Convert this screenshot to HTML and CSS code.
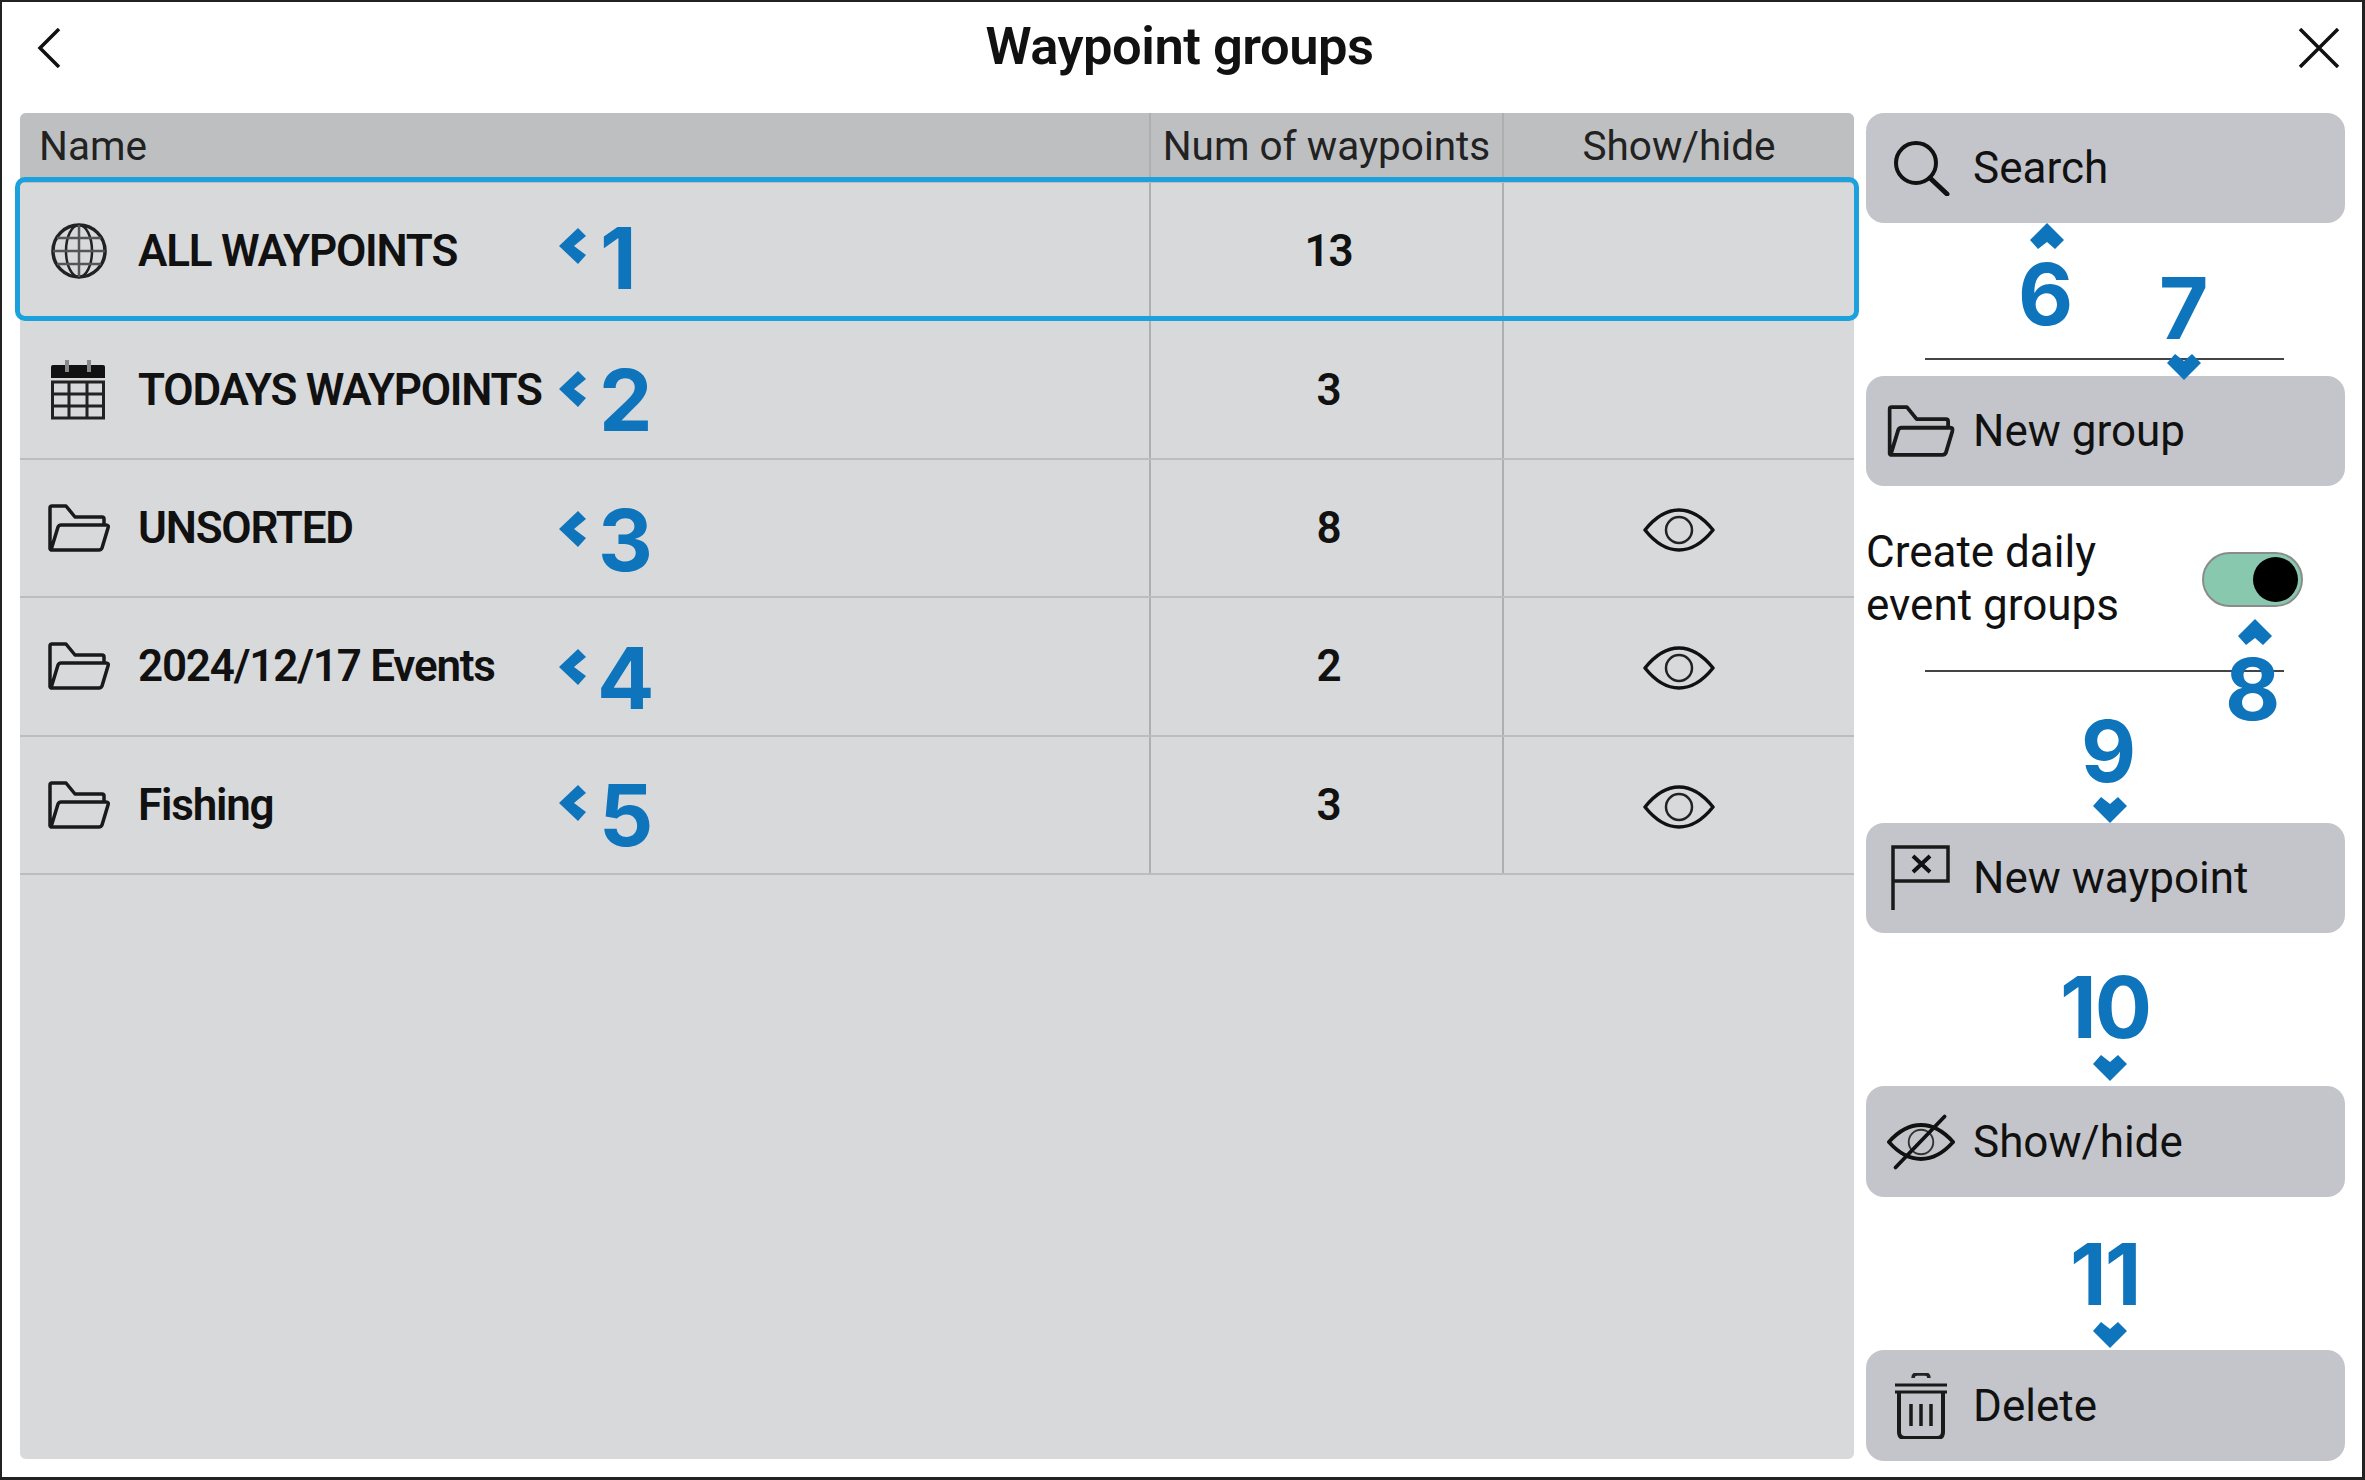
FILE: index.html
```html
<!DOCTYPE html>
<html lang="en">
<head>
  <meta charset="UTF-8">
  <title>Waypoint groups</title>
  <link rel="stylesheet" href="styles.css">
</head>
<body>

<div class="screen">
  <svg width="0" height="0" class="defs">
    <symbol id="folder" viewBox="0 0 62 48">
      <path d="M2 45V4Q2 2 4 2H18L27 13H54Q56 13 56 15V20M3 46 10 23Q11 21 13 21H58Q61 21 60 24L54 44Q53 46 51 46H4Q2 46 2 44Z" fill="none" stroke="#1a1a1a" stroke-width="3.500" stroke-linejoin="round"/>
    </symbol>
    <symbol id="eye" viewBox="0 0 72 44">
      <path d="M2 22Q18 2 36 2T70 22Q54 42 36 42T2 22Z" fill="none" stroke="#111" stroke-width="3.5" stroke-linejoin="round"/>
      <circle cx="36" cy="22" r="13" fill="none" stroke="#222" stroke-width="2.5"/>
    </symbol>
    <symbol id="mark-left" viewBox="0 0 27 36"><path d="M0 18 19 0 27 8 15 18 27 27 19 36Z" fill="#0e75bd"/></symbol>
    <symbol id="mark-up" viewBox="0 0 34 26"><path d="M17 0 34 17 25 26 17 19 8 26 0 17Z" fill="#0e75bd"/></symbol>
    <symbol id="mark-down" viewBox="0 0 34 26"><path d="M17 26 34 9 25 0 17 7 8 0 0 9Z" fill="#0e75bd"/></symbol>
  </svg>

  <header class="title-bar">
    <svg class="nav-icon" width="24" height="40" viewBox="0 0 24 40"><path d="M22 1 3 20 22 39" fill="none" stroke="#111" stroke-width="3.5"/></svg>
    <h1>Waypoint groups</h1>
    <svg class="nav-icon" width="42" height="40" viewBox="0 0 42 40"><path d="M2 1 40 39M40 1 2 39" fill="none" stroke="#111" stroke-width="3.5"/></svg>
  </header>

  <main class="content">
    <section class="table">
      <div class="row head">
        <div class="cell name-cell">Name</div>
        <div class="cell num-cell">Num of waypoints</div>
        <div class="cell show-cell">Show/hide</div>
      </div>

      <div class="row item selected">
        <div class="cell name-cell">
          <svg class="row-icon" width="62" height="56" viewBox="0 0 62 56">
            <g fill="none" stroke="#222" stroke-width="2.5">
              <circle cx="31" cy="28" r="26" stroke-width="3.5"/>
              <ellipse cx="31" cy="28" rx="13" ry="26"/>
              <path d="M31 2V54M5 28H57M9 15H53M9 41H53" stroke="#555"/>
            </g>
          </svg>
          ALL WAYPOINTS
        </div>
        <div class="cell num-cell">13</div>
        <div class="cell show-cell"></div>
      </div>

      <div class="row item">
        <div class="cell name-cell">
          <svg class="row-icon" width="62" height="60" viewBox="0 0 62 60">
            <path d="M3 7Q3 5 5 5H55Q57 5 57 7V18H3Z" fill="#111"/>
            <path d="M19 0V12M41 0V12" stroke="#888" stroke-width="4"/>
            <g fill="none" stroke="#222" stroke-width="3">
              <rect x="4.500" y="22" width="51" height="36"/>
              <path d="M4 34H56M4 46H56M21 22V58M39 22V58"/>
            </g>
          </svg>
          TODAYS WAYPOINTS
        </div>
        <div class="cell num-cell">3</div>
        <div class="cell show-cell"></div>
      </div>

      <div class="row item">
        <div class="cell name-cell">
          <svg class="row-icon" width="62" height="48"><use href="#folder"/></svg>
          UNSORTED
        </div>
        <div class="cell num-cell">8</div>
        <div class="cell show-cell"><svg class="eye-icon" width="72" height="44"><use href="#eye"/></svg></div>
      </div>

      <div class="row item">
        <div class="cell name-cell">
          <svg class="row-icon" width="62" height="48"><use href="#folder"/></svg>
          2024/12/17 Events
        </div>
        <div class="cell num-cell">2</div>
        <div class="cell show-cell"><svg class="eye-icon" width="72" height="44"><use href="#eye"/></svg></div>
      </div>

      <div class="row item">
        <div class="cell name-cell">
          <svg class="row-icon" width="62" height="48"><use href="#folder"/></svg>
          Fishing
        </div>
        <div class="cell num-cell">3</div>
        <div class="cell show-cell"><svg class="eye-icon" width="72" height="44"><use href="#eye"/></svg></div>
      </div>
    </section>

    <aside class="side">
      <div class="btn">
        <svg class="btn-icon" width="68" height="56" viewBox="0 0 68 56">
          <circle cx="29" cy="23" r="20" fill="none" stroke="#111" stroke-width="4"/>
          <path d="M43 38 60 54" stroke="#111" stroke-width="5" stroke-linecap="round"/>
        </svg>
        Search
      </div>
      <hr class="divider first">
      <div class="btn">
        <svg class="btn-icon" width="68" height="52" viewBox="0 0 62 48"><use href="#folder"/></svg>
        New group
      </div>
      <div class="daily">
        <span>Create daily<br>event groups</span>
        <span class="toggle"><span class="knob"></span></span>
      </div>
      <hr class="divider second">
      <div class="btn waypoint-btn">
        <svg class="btn-icon" width="68" height="66" viewBox="0 0 68 66">
          <path d="M6 65V2H61V36H6" fill="none" stroke="#1a1a1a" stroke-width="3.500"/>
          <path d="M26 11 43 27M43 11 26 27" stroke="#111" stroke-width="4"/>
        </svg>
        New waypoint
      </div>
      <div class="btn hide-btn">
        <svg class="btn-icon" width="68" height="58" viewBox="0 0 72 58">
          <path d="M2 29Q18 11 36 11T70 29Q54 47 36 47T2 29Z" fill="none" stroke="#111" stroke-width="4" stroke-linejoin="round"/>
          <circle cx="36" cy="29" r="13" fill="none" stroke="#333" stroke-width="2"/>
          <path d="M61 2 9 56" stroke="#111" stroke-width="4" stroke-linecap="round"/>
        </svg>
        Show/hide
      </div>
      <div class="btn delete-btn">
        <svg class="btn-icon" width="68" height="66" viewBox="0 0 68 66">
          <path d="M26 5Q26 1 30 1H38Q42 1 42 5" fill="none" stroke="#222" stroke-width="3.500"/>
          <path d="M8 12H60M8 19H60" stroke="#1a1a1a" stroke-width="3"/>
          <path d="M12 20V59Q12 65 18 65H50Q56 65 56 59V20" fill="none" stroke="#1a1a1a" stroke-width="4"/>
          <path d="M24 31V53M34 31V53M44 31V53" stroke="#1a1a1a" stroke-width="3.500"/>
        </svg>
        Delete
      </div>
    </aside>
  </main>

  <!-- callouts, placed over the screenshot -->
  <svg class="mark" style="left:559px;top:228px" width="27" height="36"><use href="#mark-left"/></svg>
  <svg class="mark" style="left:559px;top:371px" width="27" height="36"><use href="#mark-left"/></svg>
  <svg class="mark" style="left:559px;top:511px" width="27" height="36"><use href="#mark-left"/></svg>
  <svg class="mark" style="left:559px;top:649px" width="27" height="36"><use href="#mark-left"/></svg>
  <svg class="mark" style="left:559px;top:785px" width="27" height="36"><use href="#mark-left"/></svg>

  <svg class="mark" style="left:2030px;top:223px" width="34" height="26"><use href="#mark-up"/></svg>
  <svg class="mark" style="left:2167px;top:354px" width="34" height="26"><use href="#mark-down"/></svg>
  <svg class="mark" style="left:2238px;top:619px" width="34" height="26"><use href="#mark-up"/></svg>
  <svg class="mark" style="left:2093px;top:797px" width="34" height="26"><use href="#mark-down"/></svg>
  <svg class="mark" style="left:2093px;top:1055px" width="34" height="26"><use href="#mark-down"/></svg>
  <svg class="mark" style="left:2093px;top:1322px" width="34" height="26"><use href="#mark-down"/></svg>

  <span class="num" style="left:600px;top:214px">1</span>
  <span class="num" style="left:599px;top:356px">2</span>
  <span class="num" style="left:598px;top:496px">3</span>
  <span class="num" style="left:597px;top:634px">4</span>
  <span class="num" style="left:599px;top:771px">5</span>
  <span class="num" style="left:2018px;top:250px">6</span>
  <span class="num" style="left:2159px;top:264px">7</span>
  <span class="num" style="left:2225px;top:645px">8</span>
  <span class="num" style="left:2081px;top:707px">9</span>
  <span class="num tight" style="left:2060px;top:963px">10</span>
  <span class="num tight" style="left:2070px;top:1230px">11</span>
</div>

</body>
</html>
```

FILE: styles.css
```css
* { box-sizing: border-box; }

body {
  margin: 0;
  background: #fff;
  font-family: "Roboto", "Liberation Sans", sans-serif;
  color: #111;
}

.defs { position: absolute; }

.screen {
  position: relative;
  width: 2365px;
  height: 1480px;
  border: solid #222;
  border-width: 2px 3px 3px 2px;
  overflow: hidden;
}

.title-bar {
  display: flex;
  align-items: center;
  justify-content: space-between;
  height: 94px;
  padding: 0 22px 0 35px;
}

.title-bar h1 {
  margin: 0 0 6px;
  font-size: 52.5px;
  font-weight: 600;
  letter-spacing: -0.5px;
}

.nav-icon { flex: none; margin-bottom: 2px; }

.content {
  display: flex;
  gap: 12px;
  padding: 17px 0 0 18px;
}

.table {
  width: 1834px;
  height: 1346px;
  background: #d8d9db;
  border-radius: 6px;
}

.row {
  display: grid;
  grid-template-columns: 1129px 353px 352px;
}

.head {
  height: 70px;
  padding-bottom: 5px;
  background: #bebfc1;
  border-radius: 6px 6px 0 0;
  font-size: 40.5px;
  color: #222;
}

.item {
  position: relative;
  height: 138.4px;
  border-bottom: 2px solid #bcbdbf;
  font-size: 44px;
  font-weight: 600;
  letter-spacing: -1.2px;
}

.selected {
  border-bottom: 0;
}

.selected .cell {
  padding-bottom: 2px;
}

.selected::after {
  content: "";
  position: absolute;
  inset: -6px -5px 0 -5px;
  border: 5px solid #1ba1dc;
  border-radius: 10px;
}

.cell {
  display: flex;
  align-items: center;
  justify-content: center;
}

.name-cell {
  justify-content: flex-start;
  padding-left: 19px;
}

.num-cell, .show-cell {
  border-left: 2px solid #aeafb1;
}

.item .num-cell {
  padding-left: 4px;
}

.head .show-cell {
  padding-left: 2px;
  padding-right: 2px;
}

.item .name-cell {
  padding-left: 8px;
}

.row-icon {
  flex: none;
  margin-left: 20px;
  margin-right: 28px;
}

.eye-icon {
  margin-top: 4px;
}

.side {
  display: flex;
  flex-direction: column;
  width: 479px;
}

.btn {
  display: flex;
  align-items: center;
  gap: 18px;
  height: 110px;
  padding-left: 21px;
  background: #c4c5ca;
  border-radius: 18px;
  font-size: 44px;
}

.btn-icon { flex: none; }

.divider {
  width: 359px;
  height: 2px;
  margin: 0 0 0 59px;
  border: 0;
  background: #444;
}

.divider.first {
  margin-top: 135px;
  margin-bottom: 16px;
}

.divider.second {
  margin-top: 30px;
}

.daily {
  display: flex;
  align-items: flex-start;
  justify-content: space-between;
  height: 154px;
  padding: 40px 42px 0 0;
  font-size: 44px;
  line-height: 53px;
}

.toggle {
  position: relative;
  width: 101px;
  height: 55px;
  margin-top: 26px;
  background: #88c8ae;
  border: 2px solid #8a8c8c;
  border-radius: 28px;
}

.knob {
  position: absolute;
  right: 3px;
  top: 3px;
  width: 45px;
  height: 45px;
  background: #000;
  border-radius: 50%;
}

.waypoint-btn { margin-top: 151px; }
.hide-btn { margin-top: 153px; height: 111px; }
.delete-btn { margin-top: 153px; height: 111px; }

.mark {
  position: absolute;
  margin: -2px 0 0 -2px;
}

.num {
  position: absolute;
  margin: -2px 0 0 -2px;
  font-family: "Inter", "Open Sans", sans-serif;
  font-size: 85px;
  font-weight: 700;
  line-height: 90px;
  color: #0e75bd;
}

.tight {
  letter-spacing: -2px;
}
```
